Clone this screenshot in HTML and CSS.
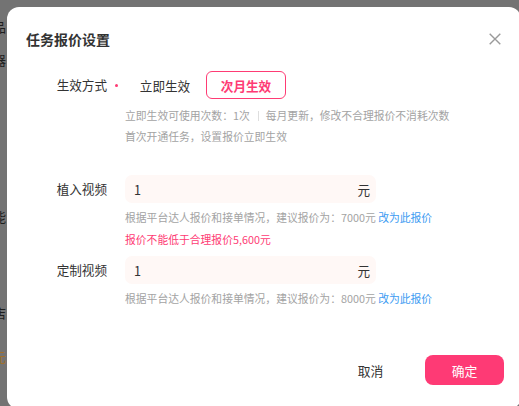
FILE: index.html
```html
<!DOCTYPE html>
<html lang="zh">
<head>
<meta charset="utf-8">
<title>任务报价设置</title>
<link rel="stylesheet" href="styles.css">
</head>
<body>
<div class="backdrop">
  <span class="bg-char c1">品</span>
  <span class="bg-char c2">器</span>
  <span class="bg-char c3">能</span>
  <span class="bg-char c4">店</span>
  <span class="bg-char c5 orange">元</span>
</div>
<div class="modal">
  <div class="header">
    <h1 class="title">任务报价设置</h1>
    <svg class="close" width="12" height="12" viewBox="0 0 12 12"><path d="M0.7 0.7L11.3 11.3M11.3 0.7L0.7 11.3" stroke="#9a9a9a" stroke-width="1.4" fill="none"/></svg>
  </div>
  <div class="form">
    <div class="row">
      <div class="label required">生效方式</div>
      <div class="field">
        <div class="options">
          <span class="option">立即生效</span>
          <span class="option active">次月生效</span>
        </div>
        <div class="hint hint-block">
          <div>立即生效可使用次数：1次<span class="sep"></span>每月更新，修改不合理报价不消耗次数</div>
          <div>首次开通任务，设置报价立即生效</div>
        </div>
      </div>
    </div>
    <div class="row row-price">
      <div class="label">植入视频</div>
      <div class="field">
        <div class="input"><span class="val">1</span><span class="unit">元</span></div>
        <div class="hint tight">根据平台达人报价和接单情况，建议报价为：7000元 <a class="link">改为此报价</a></div>
        <div class="error">报价不能低于合理报价5,600元</div>
      </div>
    </div>
    <div class="row row-price2">
      <div class="label">定制视频</div>
      <div class="field">
        <div class="input"><span class="val">1</span><span class="unit">元</span></div>
        <div class="hint tight">根据平台达人报价和接单情况，建议报价为：8000元 <a class="link">改为此报价</a></div>
      </div>
    </div>
  </div>
  <div class="footer">
    <button class="btn btn-text">取消</button>
    <button class="btn btn-primary">确定</button>
  </div>
</div>
</body>
</html>
```
FILE: styles.css
```css
html, body {
  margin: 0;
  padding: 0;
}
body {
  width: 519px;
  height: 406px;
  overflow: hidden;
  background: #737373;
  font-family: "Noto Sans CJK SC", "Noto Sans", sans-serif;
  color: #333;
  position: relative;
  padding: 7px 0 0 7px;
  box-sizing: border-box;
}
.backdrop {
  position: absolute;
  left: 0;
  top: 0;
  width: 7px;
  height: 406px;
  overflow: hidden;
}
.bg-char {
  position: absolute;
  left: -7px;
  font-size: 13px;
  line-height: 14px;
  color: #1e1e1e;
}
.c1 { top: 20px; }
.c2 { top: 53px; }
.c3 { top: 210px; }
.c4 { top: 306px; }
.c5 { top: 350px; }
.orange { color: #a0702a; }
.modal {
  position: relative;
  width: 514px;
  height: 402px;
  background: #fff;
  border-radius: 12px;
  display: flex;
  flex-direction: column;
}
.header {
  display: flex;
  align-items: center;
  justify-content: space-between;
  padding: 18px 20px 18px 19px;
  height: 28px;
}
.title {
  margin: 0;
  font-size: 14px;
  line-height: 28px;
  font-weight: 700;
  color: #333;
}
.close {
  display: block;
  margin-top: -1px;
}
.form {
  display: flex;
  flex-direction: column;
}
.row {
  display: grid;
  grid-template-columns: 118px 1fr;
  align-items: start;
}
.row-price { margin-top: 28px; }
.row-price2 { margin-top: 6px; }
.label {
  font-size: 12.6px;
  line-height: 28px;
  text-align: right;
  padding-right: 18px;
  color: #333;
  position: relative;
}
.label.required::after {
  content: "";
  position: absolute;
  right: 7px;
  top: 13px;
  width: 3px;
  height: 3px;
  border-radius: 50%;
  background: #fe3b74;
}
.field {
  display: flex;
  flex-direction: column;
}
.options {
  display: flex;
  gap: 1px;
}
.option {
  width: 80px;
  height: 28px;
  box-sizing: border-box;
  display: flex;
  align-items: center;
  justify-content: center;
  font-size: 12.6px;
  color: #333;
  border: 1.2px solid transparent;
  border-radius: 6px;
}
.option.active {
  border-color: #fe3b74;
  color: #fe3b74;
  font-weight: 700;
}
.hint {
  font-size: 10.8px;
  color: #a3a3a3;
  line-height: 21px;
}
.hint-block { margin-top: 6px; }
.sep {
  display: inline-block;
  width: 1px;
  height: 10px;
  background: #dedede;
  margin: 0 7px 0 8px;
  vertical-align: -1px;
}
.hint.tight {
  line-height: 22px;
  margin-top: 3px;
}
.link {
  color: #3d9cf2;
  cursor: pointer;
}
.error {
  font-size: 10.8px;
  line-height: 22px;
  color: #fe3b74;
}
.input {
  width: 251px;
  height: 28px;
  box-sizing: border-box;
  background: #fff8f6;
  border-radius: 7px;
  display: flex;
  align-items: center;
  justify-content: space-between;
  padding: 0 6px 0 9px;
  font-size: 12.6px;
  color: #333;
}
.footer {
  display: flex;
  justify-content: flex-end;
  align-items: center;
  gap: 15px;
  margin-top: 46px;
  padding-right: 17px;
}
.btn {
  font-family: inherit;
  border: none;
  cursor: pointer;
  font-size: 12.8px;
  height: 30px;
  border-radius: 8px;
  padding: 0;
}
.btn-text {
  background: transparent;
  color: #333;
  width: 79px;
}
.btn-primary {
  background: #fe3a75;
  color: #fff;
  width: 79px;
  font-weight: 400;
}
```
